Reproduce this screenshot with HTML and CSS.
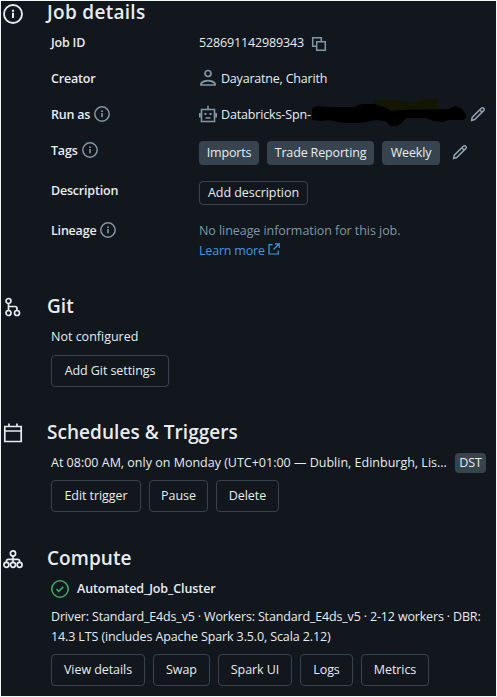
FILE: index.html
```html
<!DOCTYPE html>
<html lang="en">
<head>
<meta charset="utf-8">
<title>Job details</title>
<link rel="stylesheet" href="styles.css">
</head>
<body>
<svg class="defs" width="0" height="0">
  <symbol id="info" viewBox="0 0 16 16"><circle cx="8" cy="8" r="7.2" fill="none" stroke="currentColor" stroke-width="1.5"/><path d="M7.200 7h1.600v4.200H7.200zM7.100 4.600h1.800v1.500H7.100z" fill="currentColor"/></symbol>
  <symbol id="pencil" viewBox="0 0 16 16"><path d="M1.600 14.400l.7-3.200 9-9a1.600 1.600 0 0 1 2.400 0 1.600 1.600 0 0 1 0 2.400l-9 9zM9.800 3.800l2.400 2.400" fill="none" stroke="currentColor" stroke-width="1.500"/></symbol>
</svg>
<main class="panel">
  <section class="section job">
    <svg class="side info-side"><use href="#info"/></svg>
    <div class="body">
      <h2>Job details</h2>
      <dl class="rows">
        <div class="row r36"><dt>Job ID</dt><dd><span class="id">528691142989343</span>
          <svg class="copy" viewBox="0 0 16 16"><path d="M5 10.300H1.700V1.700h8.600V5M5.700 5.700h8.600v8.600H5.700z" fill="none" stroke="currentColor" stroke-width="1.500"/></svg></dd></div>
        <div class="row r36"><dt>Creator</dt><dd>
          <svg class="who" viewBox="0 0 18 18"><circle cx="9" cy="4.500" r="3" fill="none" stroke="currentColor" stroke-width="1.700"/><path d="M2 16v-1.500c3-3.800 11-3.800 14 0V16z" fill="none" stroke="currentColor" stroke-width="1.700"/></svg>
          <span class="creator">Dayaratne, Charith</span></dd></div>
        <div class="row r36"><dt>Run as<svg class="hint"><use href="#info"/></svg></dt><dd>
          <svg class="who" viewBox="0 0 18 18"><path d="M2.500 4.500h13v12h-13zM9 4.500V.800M.800 8v4.500M17.200 8v4.500M6.500 13h5" fill="none" stroke="currentColor" stroke-width="1.600"/><path d="M5.500 8h2v2h-2zM10.500 8h2v2h-2z" fill="currentColor"/></svg>
          <span class="spn">Databricks-Spn-</span>
          <svg class="scribble" viewBox="0 0 156 32"><path d="M62 1h24l6 2 14 0 9-3 11 0v18H62z" fill="#131600"/><path d="M0 9l5-2 12 1 25 0 8-3 12 0 10 3 7 4 12-1 35-1 10 0 7-3 6 2 5 7 0 3-3 2-14 0-7 2-8-1-8-3-20 0-4 5-5 3-6 0-6-5-10-1-15 3-16 0-15-3-9 1-9-1-2-3 1-4z" fill="#000"/></svg>
          <svg class="pencil run"><use href="#pencil"/></svg></dd></div>
        <div class="row r40"><dt>Tags<svg class="hint"><use href="#info"/></svg></dt><dd class="tags"><span class="tag w60">Imports</span><span class="tag w107">Trade Reporting</span><span class="tag w58">Weekly</span><svg class="pencil"><use href="#pencil"/></svg></dd></div>
        <div class="row r40"><dt>Description</dt><dd><button class="small">Add description</button></dd></div>
        <div class="row r40"><dt>Lineage<svg class="hint"><use href="#info"/></svg></dt><dd class="lineage"><span>No lineage information for this job.</span><a>Learn more<svg class="ext" viewBox="0 0 12 12"><path d="M4.500 1.700H1v9.300h9.300V7.500M7 .800h4.200V5M11 1L5.500 6.500" fill="none" stroke="currentColor" stroke-width="1.200"/></svg></a></dd></div>
      </dl>
    </div>
  </section>
  <section class="section git">
    <svg class="side" viewBox="0 0 20 20"><g fill="none" stroke="currentColor" stroke-width="1.700"><circle cx="5.500" cy="4" r="2.500"/><circle cx="5.500" cy="16" r="2.500"/><circle cx="14" cy="16" r="2.500"/><path d="M5.500 6.500v7M5.500 9.500h6.500q2 0 2 2v2"/></g></svg>
    <div class="body">
      <h2>Git</h2>
      <p>Not configured</p>
      <div class="buttons"><button class="w118">Add Git settings</button></div>
    </div>
  </section>
  <section class="section sched">
    <svg class="side" viewBox="0 0 20 20"><path d="M1.800 3.500h16.400v15H1.800zM1.800 8h16.400M6 .500v3M14 .500v3" fill="none" stroke="currentColor" stroke-width="1.700"/></svg>
    <div class="body">
      <h2>Schedules &amp; Triggers</h2>
      <div class="when"><span class="when-text">At 08:00 AM, only on Monday (UTC+01:00 — Dublin, Edinburgh, Lis...</span><span class="dst">DST</span></div>
      <div class="buttons"><button class="w90">Edit trigger</button><button class="w59">Pause</button><button class="w63">Delete</button></div>
    </div>
  </section>
  <section class="section compute">
    <svg class="side" viewBox="0 0 20 20"><g fill="none" stroke="currentColor" stroke-width="1.700"><circle cx="10" cy="4.500" r="2.600"/><circle cx="3.400" cy="15.800" r="2.500"/><circle cx="10" cy="15.800" r="2.500"/><circle cx="16.600" cy="15.800" r="2.500"/><path d="M10 7v6.300M3.400 13.300v-1q0-2 2-2h9.200q2 0 2 2v1"/></g></svg>
    <div class="body">
      <h2>Compute</h2>
      <div class="cluster"><svg viewBox="0 0 18 18"><circle cx="9" cy="9" r="8.200" fill="none" stroke="currentColor" stroke-width="1.600"/><path d="M5.500 9.200l2.300 2.200 4.500-4.500" fill="none" stroke="currentColor" stroke-width="1.600"/></svg><b>Automated_Job_Cluster</b></div>
      <p class="spec">Driver: Standard_E4ds_v5 · Workers: Standard_E4ds_v5 · 2-12 workers · DBR:<br><span class="l2">14.3 LTS (includes Apache Spark 3.5.0, Scala 2.12)</span></p>
      <div class="buttons"><button class="w94">View details</button><button class="w57">Swap</button><button class="w74">Spark UI</button><button class="w53">Logs</button><button class="w68">Metrics</button></div>
    </div>
  </section>
</main>
</body>
</html>
```
FILE: styles.css
```css
* { box-sizing: border-box; }
body { margin: 0; background: #fff; font: 12.5px/20px "Open Sans", "Noto Sans", sans-serif; letter-spacing: -0.15px; color: #e8ecf0; }
.defs { display: block; height: 0; }
.panel { width: 497px; height: 697px; border: 1px solid #f2f6f6; background: #11171c; overflow: hidden; }
.section { display: flex; padding-left: 2px; }
.job { height: 293px; }
.git { height: 126px; }
.sched { height: 126px; }
.side { width: 20px; height: 20px; flex: none; margin: 3px 24px 0 0; }
.body { flex: 1; }
h2 { margin: 0; font-size: 19px; line-height: 24px; font-weight: 600; letter-spacing: 0.05px; }
.job h2 { margin-top: -1px; letter-spacing: 0.3px; }
.rows { margin: 9px 0 0 4px; }
.row { display: flex; white-space: nowrap; }
.r36 { height: 36px; }
.r40 { height: 40px; }
dt { width: 148px; font-weight: 600; display: flex; height: 20px; letter-spacing: -0.2px; }
dd { margin: 0; display: flex; height: 20px; }
.hint { width: 16px; height: 16px; margin: 1px 0 0 4px; color: #8396a5; }
.copy { width: 16px; height: 16px; margin: 3px 0 0 7px; color: #8396a5; }
.who { width: 18px; height: 18px; margin: 0 4px 0 0; color: #8396a5; }
.creator { letter-spacing: -0.2px; }
.spn { width: 91px; }
.scribble { width: 156px; height: 32px; margin: -6px 0 0; flex: none; }
.pencil { width: 16px; height: 16px; color: #92a4b3; flex: none; }
.run { margin: 1px 0 0 2px; }
.tags { gap: 8px; }
.tag { height: 24px; line-height: 24px; border-radius: 4px; background: #37444f; text-align: center; }
.tags .pencil { margin: 3px 0 0 4px; }
button { height: 32px; padding: 0; border: 1px solid #37444f; border-radius: 4px; background: transparent; color: inherit; font: inherit; letter-spacing: -0.07px; white-space: nowrap; }
.small { width: 109px; height: 24px; line-height: 22px; letter-spacing: -0.05px; }
.lineage { flex-direction: column; color: #8396a5; letter-spacing: -0.06px; }
.lineage a { color: #4299e0; letter-spacing: -0.2px; }
.ext { width: 12px; height: 12px; margin-left: 3px; }
p { margin: 9px 0 0 4px; letter-spacing: 0; }
.buttons { display: flex; gap: 8px; margin: 7px 0 0 4px; }
.git .buttons { margin-top: 8px; }
.when { display: flex; margin: 9px 0 0 4px; white-space: nowrap; }
.when-text { width: 404px; letter-spacing: 0; }
.dst { width: 31px; height: 20px; background: #37444f; border-radius: 4px; text-align: center; }
.cluster { display: flex; margin: 9px 0 0 4px; }
.cluster svg { width: 18px; height: 18px; margin: 1px 8px 0 0; color: #3caa60; }
b { font-weight: 600; letter-spacing: -0.1px; }
.spec { margin-top: 8px; white-space: nowrap; letter-spacing: -0.16px; }
.l2 { letter-spacing: -0.12px; }
.w60 { width: 60px; } .w107 { width: 107px; } .w58 { width: 58px; }
.w118 { width: 118px; } .w90 { width: 90px; } .w59 { width: 59px; } .w63 { width: 63px; }
.w94 { width: 94px; } .w57 { width: 57px; } .w74 { width: 74px; } .w53 { width: 53px; } .w68 { width: 68px; }
```
